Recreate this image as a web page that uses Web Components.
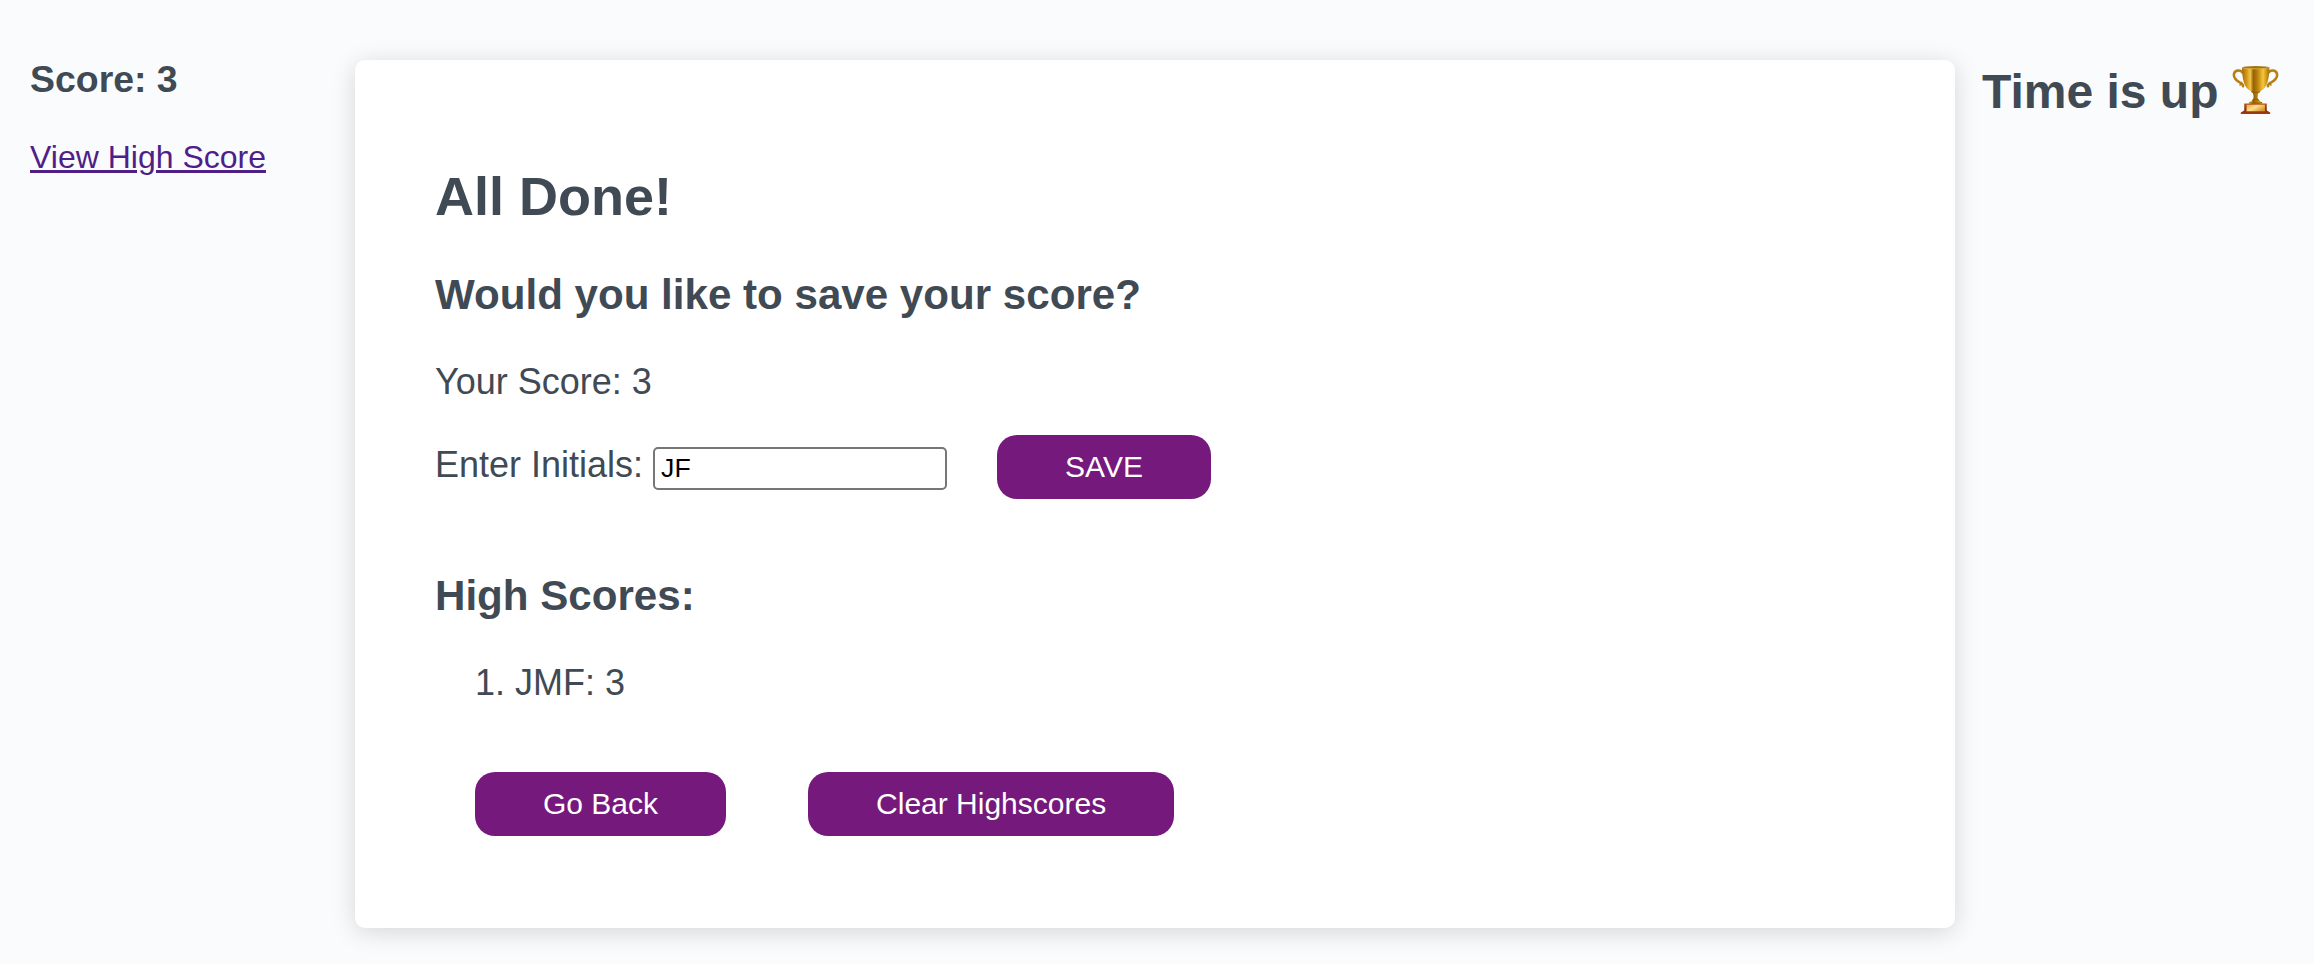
<!DOCTYPE html>
<html lang="en">
<head>
<meta charset="utf-8">
<title>Quiz</title>
<style>
html,body{margin:0;height:100%}
body{background:#fafbfd;color:#3f4a54;font-family:"Liberation Sans",Arial,Helvetica,sans-serif;font-size:36px;overflow:hidden}
</style>
</head>
<body>
<quiz-page>
  <score-panel slot="left" score="3"></score-panel>
  <quiz-card slot="main">
    <save-score score="3" initials="JF"></save-score>
    <high-scores>
      <li slot="item">1. JMF: 3</li>
    </high-scores>
  </quiz-card>
  <quiz-timer slot="right">Time is up</quiz-timer>
</quiz-page>
<script>
const define = (name, html) => customElements.define(name, class extends HTMLElement {
  constructor() {
    super();
    const t = document.createElement('template');
    t.innerHTML = html(this);
    this.attachShadow({ mode: 'open' }).append(t.content.cloneNode(true));
  }
});

define('quiz-page', () => `
<style>
:host{display:grid;grid-template-columns:355px 1600px 1fr;align-items:start}
</style>
<slot name="left"></slot><slot name="main"></slot><slot name="right"></slot>`);

define('score-panel', el => `
<style>
:host{display:block;padding:59px 0 0 30px}
h3{margin:0;font-size:37.44px;line-height:40px}
a{display:block;width:max-content;margin-top:38px;font-size:32px;line-height:40px;color:#4f1f87;text-decoration:underline;text-decoration-thickness:3px;text-underline-offset:2px}
</style>
<h3>Score: ${el.getAttribute('score')}</h3><a href="#">View High Score</a>`);

define('quiz-card', () => `
<style>
:host{display:block;box-sizing:border-box;margin-top:60px;height:868px;padding:106px 80px 0;background:#fff;border-radius:10px;box-shadow:0 4px 24px rgba(0,0,0,.15)}
</style>
<slot></slot>`);

define('purple-button', () => `
<style>
:host{display:inline-block}
button{display:block;height:64px;margin:0;padding:0 68px;border:0;border-radius:20px;background:#75197c;color:#fff;font:30px/64px "Liberation Sans",Arial,sans-serif;white-space:nowrap}
</style>
<button><slot></slot></button>`);

define('save-score', el => `
<style>
:host{display:block}
h2{margin:0;font-size:54px;line-height:60px}
h3{margin:45px 0 0;font-size:42.12px;line-height:48px}
p{margin:43px 0 0;line-height:40px}
.row{display:flex;align-items:baseline;height:64px;margin-top:33px}
label{line-height:40px}
input{box-sizing:border-box;width:294px;height:43px;margin:0 50px 0 10px;padding:2px 6px;border:2px solid #767676;border-radius:5px;background:#fff;color:#000;font:26.67px "Liberation Sans",Arial,sans-serif}
</style>
<h2>All Done!</h2>
<h3>Would you like to save your score?</h3>
<p>Your Score: ${el.getAttribute('score')}</p>
<div class="row"><label for="i">Enter Initials:</label><input id="i" value="${el.getAttribute('initials')}"><purple-button>SAVE</purple-button></div>`);

define('high-scores', () => `
<style>
:host{display:block;margin-top:73px}
h3{margin:0;font-size:42.12px;line-height:48px}
ol{margin:43px 0 0;padding:0 0 0 40px;list-style:none;line-height:40px}
::slotted(li){display:block}
.row{display:flex;gap:82px;margin:69px 0 0 40px}
</style>
<h3>High Scores:</h3>
<ol><slot name="item"></slot></ol>
<div class="row"><purple-button>Go Back</purple-button><purple-button>Clear Highscores</purple-button></div>`);

define('trophy-icon', () => `
<style>:host{display:block;width:47px;height:50px}svg{display:block}</style>
<svg width="47" height="50" viewBox="0 0 48 50" preserveAspectRatio="none">
<defs>
<linearGradient id="cup"><stop offset="0" stop-color="#a86c08"/><stop offset=".18" stop-color="#d39a1c"/><stop offset=".3" stop-color="#f0c649"/><stop offset=".42" stop-color="#976106"/><stop offset=".56" stop-color="#b67e0c"/><stop offset=".77" stop-color="#f7c637"/><stop offset="1" stop-color="#a86c05"/></linearGradient>
<linearGradient id="base" x2="0" y2="1"><stop stop-color="#b5551d"/><stop offset=".55" stop-color="#8a3007"/><stop offset="1" stop-color="#a63b0c"/></linearGradient>
<linearGradient id="plate" x2="1" y2=".6"><stop stop-color="#e4a73c"/><stop offset=".5" stop-color="#ffe08a"/><stop offset="1" stop-color="#d99a35"/></linearGradient>
</defs>
<g fill="none" stroke="#b97d12" stroke-width="2.6" stroke-linecap="round">
<path d="M11 8C9.500 4.700 3 4.300 2 9c-.8 4.200 3 6.800 6.300 8.700 2.400 1.300 3.300 2 3 3.600"/>
<path d="M37 8C38.500 4.700 45 4.300 46 9c.8 4.200-3 6.800-6.300 8.700-2.400 1.300-3.300 2-3 3.600"/>
<path d="M9.700 17.500l-1.500 2.600M38.300 17.500l1.500 2.600" stroke-width="1.500"/>
</g>
<path d="M10.200 2.500C10.500 14 12 22.500 19 26c2 1.200 3 3 3 5.200 0 3-1 4.800-4.800 6v2h14v-2c-3.800-1.200-5-3-5-6 0-2.200 1-4 3.200-5.200C36.300 22.500 37.900 14 38.200 2.500z" fill="url(#cup)"/>
<ellipse cx="24.200" cy="2.500" rx="14" ry="1.500" fill="#9f7419"/>
<path d="M10.200 2.500c3 1.800 25 1.800 28 0" fill="none" stroke="#e8b93c" stroke-width=".8"/>
<path d="M19.500 26.700c2.500 1 6.800 1 9.300 0M20.500 35.300c2-1.300 5.300-1.300 7.300 0M18 37.500c3 1 9.500 1 12.500 0" fill="none" stroke="#945d05" stroke-width="1"/>
<path d="M12.500 38.500h23v7l3.500 2V49H9v-1.500l3.500-2z" fill="url(#base)"/>
<path d="M14.800 39.700h18.800v6.600H14.800z" fill="url(#plate)"/>
</svg>`);

define('quiz-timer', () => `
<style>
:host{display:flex;padding:65px 0 0 27px;font-size:48px;font-weight:700;line-height:54px}
trophy-icon{margin-left:13px}
</style>
<span><slot></slot></span><trophy-icon></trophy-icon>`);
</script>
</body>
</html>
